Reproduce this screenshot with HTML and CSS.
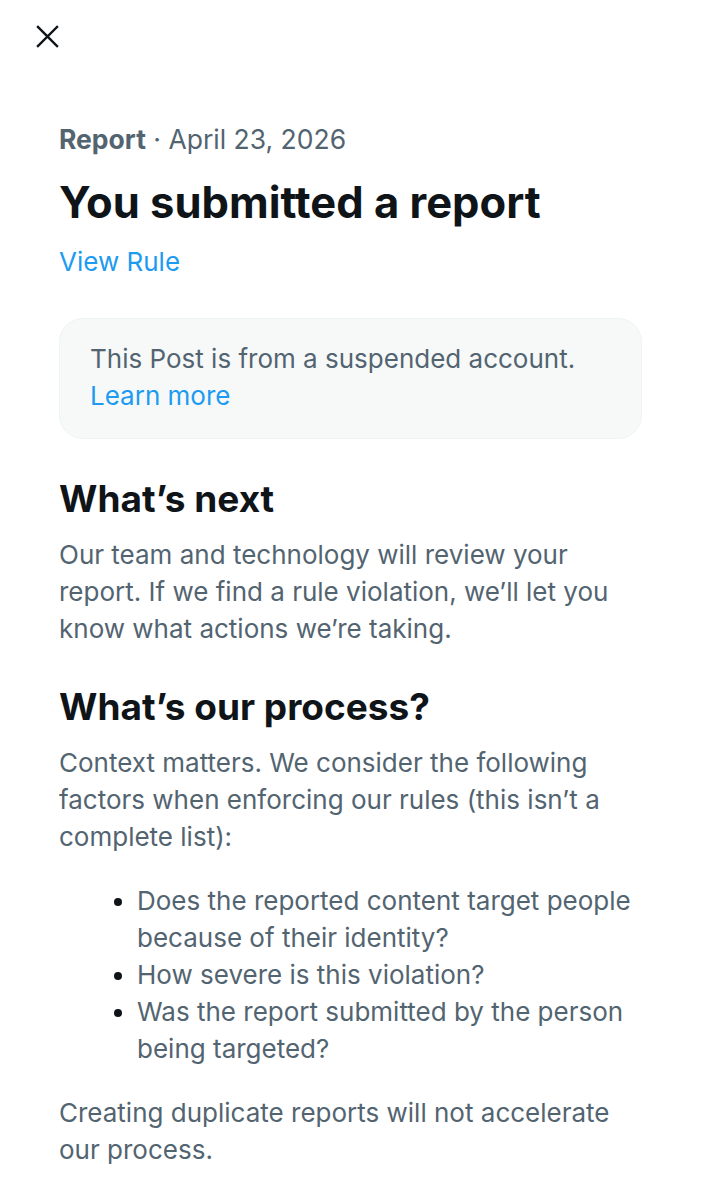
FILE: index.html
```html
<!DOCTYPE html>
<html lang="en">
<head>
<meta charset="utf-8">
<title>Report</title>
<link rel="stylesheet" href="styles.css">
</head>
<body>
<div class="page">
  <header class="topbar">
    <button class="close" aria-label="Close">
      <svg viewBox="0 0 24 24" width="24" height="24"><path d="M2 2 L22 22 M22 2 L2 22" stroke="#0f1419" stroke-width="2.4" stroke-linecap="square" fill="none"/></svg>
    </button>
  </header>
  <main class="content">
    <div class="meta"><span class="meta-strong">Report</span> · April 23, 2026</div>
    <h1 class="title">You submitted a report</h1>
    <a class="link" href="#">View Rule</a>
    <div class="notice">
      <p class="notice-text">This Post is from a suspended account.</p>
      <a class="link" href="#">Learn more</a>
    </div>
    <h2 class="heading">What’s next</h2>
    <p class="para">Our team and technology will review your report. If we find a rule violation, we’ll let you know what actions we’re taking.</p>
    <h2 class="heading">What’s our process?</h2>
    <p class="para">Context matters. We consider the following factors when enforcing our rules (this isn’t a complete list):</p>
    <ul class="factors">
      <li>Does the reported content target people because of their identity?</li>
      <li>How severe is this violation?</li>
      <li>Was the report submitted by the person being targeted?</li>
    </ul>
    <p class="para">Creating duplicate reports will not accelerate our process.</p>
  </main>
</div>
</body>
</html>
```

FILE: styles.css
```css
html, body {
  margin: 0;
  padding: 0;
  background: #ffffff;
}
body {
  font-family: Inter, Roboto, "Noto Sans", Arial, sans-serif;
  color: #536471;
  -webkit-font-smoothing: antialiased;
}
.page {
  width: 701px;
}
.topbar {
  height: 75px;
  display: flex;
  align-items: flex-start;
  padding: 25px 0 0 36px;
  box-sizing: border-box;
}
.close {
  background: none;
  border: 0;
  padding: 0;
  width: 24px;
  height: 24px;
  display: flex;
  cursor: pointer;
}
.close svg {
  width: 23px;
  height: 23px;
}
.content {
  padding: 46px 59px 0 59px;
  display: flex;
  flex-direction: column;
  align-items: flex-start;
}
.meta {
  font-size: 26.5px;
  line-height: 37px;
  color: #536471;
}
.meta-strong {
  font-weight: 700;
}
.title {
  margin: 20px 0 17px;
  font-size: 43.5px;
  line-height: 48px;
  font-weight: 700;
  color: #0f1419;
}
.link {
  display: block;
  font-size: 26px;
  line-height: 37px;
  color: #1d9bf0;
  text-decoration: none;
}
.notice {
  margin-top: 38px;
  align-self: stretch;
  background: #f7f9f9;
  border: 1px solid #eff3f4;
  border-radius: 24px;
  padding: 21px 30px 24px;
}
.notice-text {
  margin: 0;
  font-size: 26px;
  line-height: 37px;
  color: #536471;
}
.heading {
  margin: 40px 0 17px;
  font-size: 37px;
  line-height: 40px;
  font-weight: 700;
  color: #0f1419;
}
.para {
  margin: 0;
  font-size: 26px;
  line-height: 37px;
  color: #536471;
}
.factors {
  margin: 27px 0;
  padding-left: 78px;
  font-size: 26px;
  line-height: 37px;
  color: #536471;
}
.factors li::marker {
  color: #0f1419;
}
```
